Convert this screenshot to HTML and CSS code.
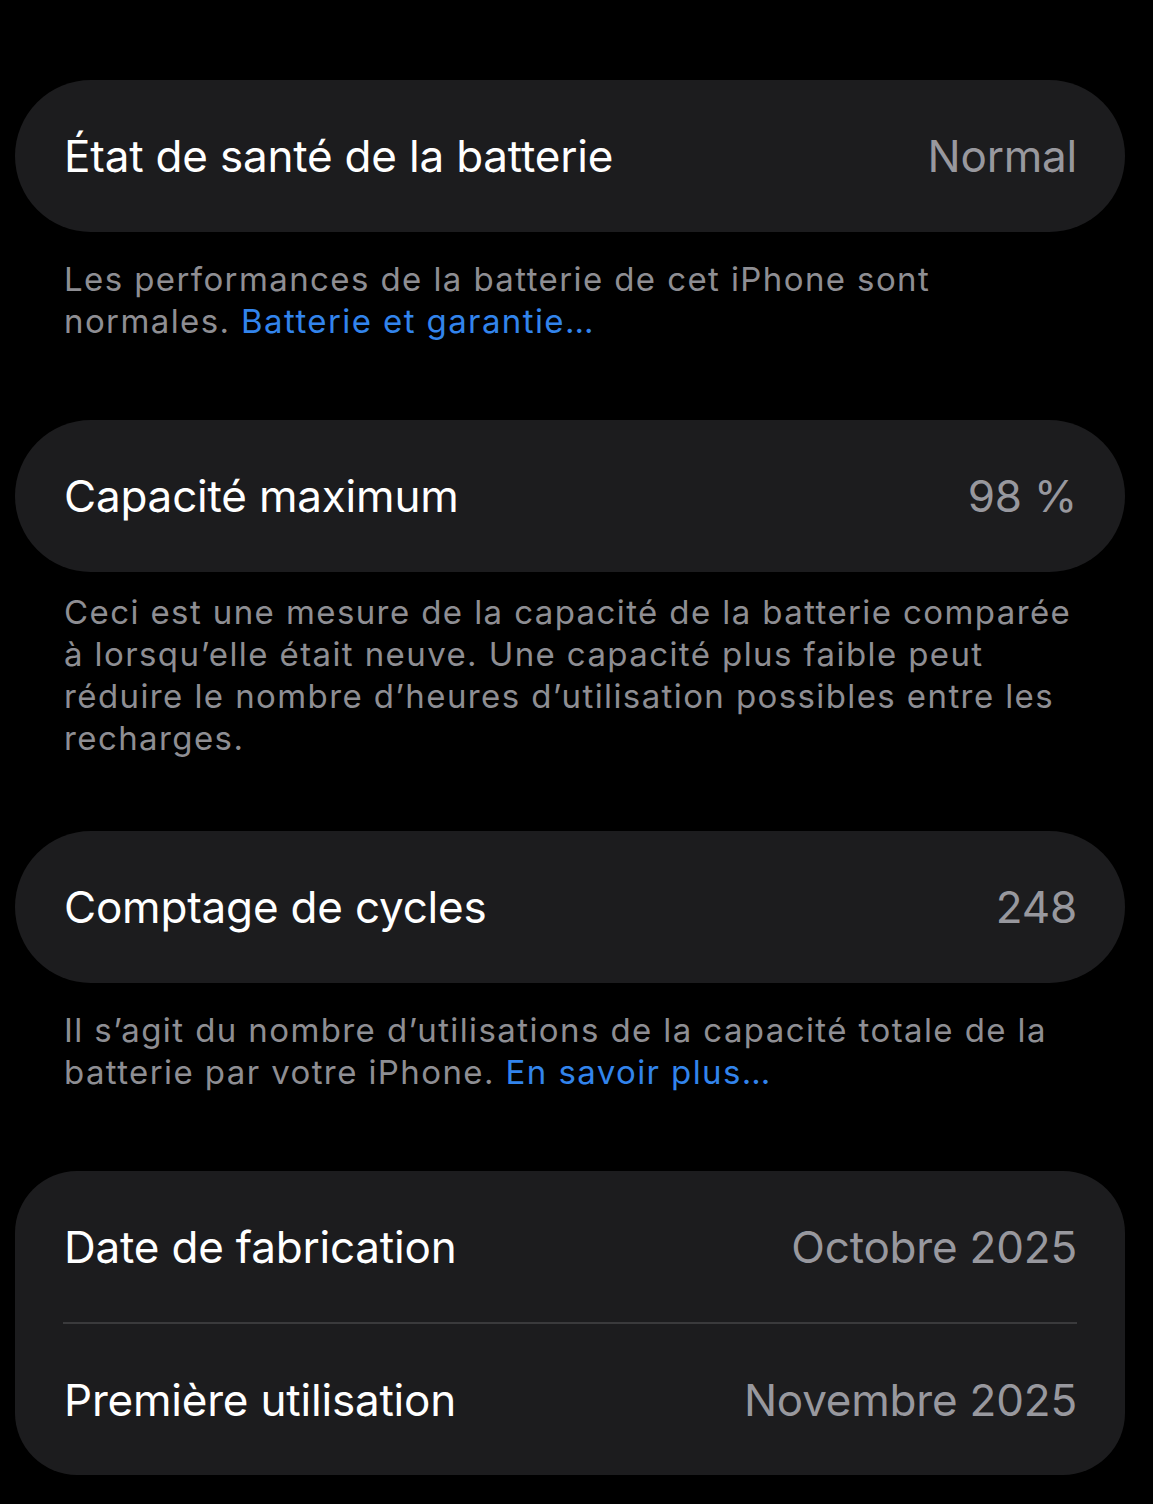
FILE: index.html
```html
<!DOCTYPE html>
<html lang="fr">
<head>
    <meta charset="UTF-8">
    <meta name="viewport" content="width=device-width, initial-scale=1.0">
    <title>Santé de la batterie</title>
    <link rel="stylesheet" href="styles.css">
</head>
<body>
    <div class="page">
        <div class="section">
            <div class="card">
                <div class="row">
                    <span class="row-title">État de santé de la batterie</span>
                    <span class="row-value">Normal</span>
                </div>
            </div>
            <p class="footer">Les performances de la batterie de cet iPhone sont normales. <a href="#">Batterie et garantie…</a></p>
        </div>
        <div class="section section-tight">
            <div class="card">
                <div class="row">
                    <span class="row-title">Capacité maximum</span>
                    <span class="row-value">98 %</span>
                </div>
            </div>
            <p class="footer">Ceci est une mesure de la capacité de la batterie comparée à lorsqu’elle était neuve. Une capacité plus faible peut réduire le nombre d’heures d’utilisation possibles entre les recharges.</p>
        </div>
        <div class="section">
            <div class="card">
                <div class="row">
                    <span class="row-title">Comptage de cycles</span>
                    <span class="row-value">248</span>
                </div>
            </div>
            <p class="footer">Il s’agit du nombre d’utilisations de la capacité totale de la batterie par votre iPhone. <a href="#">En savoir plus…</a></p>
        </div>
        <div class="section">
            <div class="card card-group">
                <div class="row">
                    <span class="row-title">Date de fabrication</span>
                    <span class="row-value">Octobre 2025</span>
                </div>
                <div class="separator"></div>
                <div class="row">
                    <span class="row-title">Première utilisation</span>
                    <span class="row-value">Novembre 2025</span>
                </div>
            </div>
        </div>
    </div>
</body>
</html>
```

FILE: styles.css
```css
body {
    margin: 0;
    background: #000;
    font-family: Inter, "Noto Sans", sans-serif;
    color: #fff;
}
.page {
    padding: 80px 28px 0 15px;
}
.section {
    margin-bottom: 78px;
}
.card {
    background: #1c1c1e;
    border-radius: 76px;
}
.card-group {
    border-radius: 62px;
}
.row {
    display: flex;
    align-items: center;
    justify-content: space-between;
    height: 152px;
    padding: 0 48px 0 49px;
}
.card-group .row {
    height: 151px;
}
.row-title {
    font-size: 44px;
    letter-spacing: -0.2px;
}
.row-value {
    font-size: 44px;
    letter-spacing: -0.2px;
    color: #98989e;
}
.separator {
    height: 2px;
    background: #3a3a3c;
    margin: 0 48px 0 48px;
}
.footer {
    margin: 0;
    padding: 26px 48px 0 49px;
    font-size: 33px;
    line-height: 42px;
    letter-spacing: 1.4px;
    color: #8e8e93;
}
.footer a {
    color: #3284ec;
    text-decoration: none;
}
.section-tight {
    margin-bottom: 72px;
}
.section-tight .footer {
    padding-top: 19px;
}
```
